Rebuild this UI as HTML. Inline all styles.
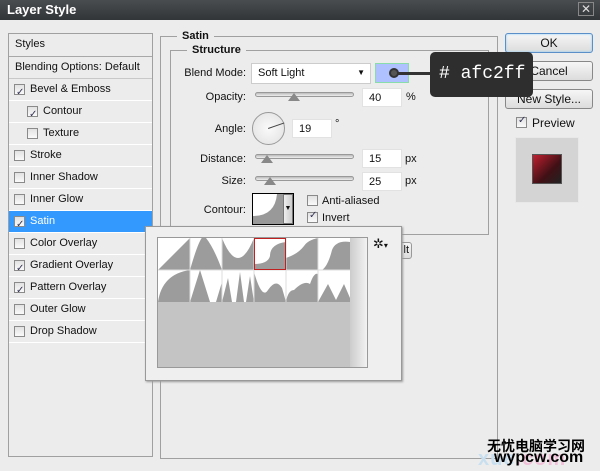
<!DOCTYPE html>
<html><head><meta charset="utf-8"><style>
*{margin:0;padding:0;box-sizing:border-box}
body{width:600px;height:471px;overflow:hidden;background:#ececec;font-family:"Liberation Sans","DejaVu Sans",sans-serif;font-size:11px;color:#111;position:relative}
.a{position:absolute}
.title{left:0;top:0;width:600px;height:20px;background:linear-gradient(#4a4d50,#323538);color:#fff;font-weight:bold;font-size:13px;line-height:20px;padding-left:7px}
.x{right:6px;top:2px;width:16px;height:14px;border:1px solid #888;color:#ddd;font-size:12px;line-height:12px;text-align:center}
.left{left:8px;top:33px;width:145px;height:424px;border:1px solid #a0a0a0;background:#ececec}
.row{position:absolute;left:0;width:143px;height:22px;border-bottom:1px solid #fff;line-height:21px}
.cb{position:absolute;width:11px;height:11px;border:1px solid #8a8a8a;background:linear-gradient(#e2e2e2,#fafafa)}
.cb.c::after{content:"✓";position:absolute;left:1px;top:-3px;font-size:10px;color:#335;font-weight:bold}
.box{border:1px solid #a0a0a0}
.leg{background:#ececec;font-weight:bold;padding:0 5px;line-height:12px}
.inp{background:#fff;border:1px solid #e2e2e2;padding-left:6px;line-height:18px}
.track{height:5px;border:1px solid #999;border-radius:3px;background:linear-gradient(#bbb,#eee)}
.thumb{width:0;height:0;border-left:6px solid transparent;border-right:6px solid transparent;border-bottom:8px solid #888}
.btn{left:505px;width:88px;height:20px;border:1px solid #888;border-radius:3px;background:linear-gradient(#f6f6f6,#dcdcdc);text-align:center;line-height:18px;font-size:12px}
.lbl{text-align:right;width:80px}
</style></head><body>
<div class="a title">Layer Style</div>
<div class="a x">✕</div>

<div class="a left">
 <div class="row" style="top:0;height:23px;padding-left:6px;border-bottom:1px solid #a8a8a8">Styles</div>
 <div class="row" style="top:23px;padding-left:6px;border-bottom:1px solid #c8c8c8">Blending Options: Default</div>
 <div class="row" style="top:45px"><span class="cb c" style="left:5px;top:5px"></span><span style="position:absolute;left:21px">Bevel &amp; Emboss</span></div>
 <div class="row" style="top:67px"><span class="cb c" style="left:18px;top:5px"></span><span style="position:absolute;left:34px">Contour</span></div>
 <div class="row" style="top:89px"><span class="cb" style="left:18px;top:5px"></span><span style="position:absolute;left:34px">Texture</span></div>
 <div class="row" style="top:111px"><span class="cb" style="left:5px;top:5px"></span><span style="position:absolute;left:21px">Stroke</span></div>
 <div class="row" style="top:133px"><span class="cb" style="left:5px;top:5px"></span><span style="position:absolute;left:21px">Inner Shadow</span></div>
 <div class="row" style="top:155px"><span class="cb" style="left:5px;top:5px"></span><span style="position:absolute;left:21px">Inner Glow</span></div>
 <div class="row" style="top:177px;background:#3399ff;color:#fff"><span class="cb c" style="left:5px;top:5px"></span><span style="position:absolute;left:21px">Satin</span></div>
 <div class="row" style="top:199px"><span class="cb" style="left:5px;top:5px"></span><span style="position:absolute;left:21px">Color Overlay</span></div>
 <div class="row" style="top:221px"><span class="cb c" style="left:5px;top:5px"></span><span style="position:absolute;left:21px">Gradient Overlay</span></div>
 <div class="row" style="top:243px"><span class="cb c" style="left:5px;top:5px"></span><span style="position:absolute;left:21px">Pattern Overlay</span></div>
 <div class="row" style="top:265px"><span class="cb" style="left:5px;top:5px"></span><span style="position:absolute;left:21px">Outer Glow</span></div>
 <div class="row" style="top:287px"><span class="cb" style="left:5px;top:5px"></span><span style="position:absolute;left:21px">Drop Shadow</span></div>
</div>

<div class="a box" style="left:160px;top:36px;width:338px;height:423px"></div>
<div class="a leg" style="left:177px;top:30px">Satin</div>
<div class="a box" style="left:170px;top:50px;width:319px;height:185px"></div>
<div class="a leg" style="left:187px;top:44px">Structure</div>

<div class="a lbl" style="left:166px;top:67px">Blend Mode:</div>
<div class="a inp" style="left:251px;top:63px;width:120px;height:21px;border-color:#ccc">Soft Light<span style="position:absolute;right:5px;top:0;font-size:8px">▼</span></div>
<div class="a" style="left:375px;top:63px;width:34px;height:20px;background:#afc2ff;border:1px solid #8da"></div>
<div class="a" style="left:389px;top:68px;width:10px;height:10px;border-radius:50%;background:#555;border:2px solid #333"></div>
<div class="a" style="left:398px;top:72px;width:34px;height:3px;background:#333"></div>

<div class="a lbl" style="left:166px;top:91px">Opacity:</div>
<div class="a track" style="left:255px;top:92px;width:99px"></div>
<div class="a thumb" style="left:288px;top:93px"></div>
<div class="a inp" style="left:362px;top:88px;width:40px;height:19px">40</div>
<div class="a" style="left:406px;top:91px">%</div>

<div class="a lbl" style="left:166px;top:123px">Angle:</div>
<div class="a" style="left:252px;top:112px;width:33px;height:33px;border-radius:50%;border:1px solid #999;background:radial-gradient(#fafafa,#e0e0e0)"></div>
<div class="a" style="left:268px;top:128px;width:17px;height:1px;background:#444;transform-origin:0 0;transform:rotate(-19deg)"></div>
<div class="a inp" style="left:292px;top:119px;width:40px;height:19px">19</div>
<div class="a" style="left:335px;top:118px">°</div>

<div class="a lbl" style="left:166px;top:153px">Distance:</div>
<div class="a track" style="left:255px;top:154px;width:99px"></div>
<div class="a thumb" style="left:261px;top:155px"></div>
<div class="a inp" style="left:362px;top:149px;width:40px;height:19px">15</div>
<div class="a" style="left:405px;top:153px">px</div>

<div class="a lbl" style="left:166px;top:175px">Size:</div>
<div class="a track" style="left:255px;top:176px;width:99px"></div>
<div class="a thumb" style="left:264px;top:177px"></div>
<div class="a inp" style="left:362px;top:172px;width:40px;height:19px">25</div>
<div class="a" style="left:405px;top:175px">px</div>

<div class="a lbl" style="left:166px;top:204px">Contour:</div>
<div class="a" style="left:252px;top:193px;width:42px;height:32px;border:1px solid #000;background:#fff;overflow:hidden">
 <svg width="40" height="30"><path d="M0 30 L0 22 Q22 22 24 0 L32 0 L32 30Z" fill="#999"/></svg>
</div>
<div class="a" style="left:283px;top:194px;width:10px;height:30px;background:linear-gradient(90deg,#eee,#ccc);border:1px solid #777;font-size:7px;text-align:center;line-height:28px">▼</div>
<div class="a cb" style="left:307px;top:195px"></div><div class="a" style="left:322px;top:195px">Anti-aliased</div>
<div class="a cb c" style="left:307px;top:212px"></div><div class="a" style="left:322px;top:212px">Invert</div>

<div class="a" style="left:385px;top:242px;width:27px;height:17px;border:1px solid #999;border-radius:3px;background:linear-gradient(#f6f6f6,#ddd);line-height:15px;text-align:right;padding-right:2px">lt</div>

<div class="a" style="left:145px;top:226px;width:257px;height:155px;background:#efefef;border:1px solid #999;box-shadow:1px 1px 2px #999"></div>
<div class="a" style="left:157px;top:237px;width:211px;height:131px;background:#c4c4c4;border:1px solid #999"></div>
<div class="a" style="left:350px;top:238px;width:17px;height:129px;background:linear-gradient(90deg,#ccc,#f2f2f2)"></div>
<svg class="a" style="left:158px;top:238px" width="192" height="64">
 <rect width="192" height="64" fill="#fff"/>
 <g fill="#9c9c9c">
 <path d="M0 32 L32 0 L32 32Z"/>
 <path d="M32 32 Q44 -10 48 0 Q56 10 64 32Z"/>
 <path d="M64 0 Q80 40 96 0 L96 32 L64 32Z"/>
 <path d="M96 32 L96 26 Q110 26 112 18 Q112 6 128 4 L128 32Z"/>
 <path d="M128 32 L128 20 Q140 16 146 8 Q150 2 160 0 L160 32Z"/>
 <path d="M160 32 L164 32 Q170 28 174 12 Q178 2 192 4 L192 32Z"/>
 <path d="M0 64 Q4 36 32 32 L32 64Z"/>
 <path d="M32 64 L42 32 L52 64 L58 64 L64 44 L64 64Z"/>
 <path d="M64 64 L70 40 L74 64 L78 64 L82 34 L86 64 L88 64 L92 38 L96 64Z"/>
 <path d="M96 64 L96 34 Q104 62 110 52 Q118 40 124 50 L128 64Z"/>
 <path d="M128 64 Q130 52 136 52 Q146 42 152 46 Q156 34 160 36 L160 64Z"/>
 <path d="M160 64 L170 46 L178 62 L186 46 L192 60 L192 64Z"/>
 </g>
 <g stroke="#ddd"><path d="M32 0V64M64 0V64M96 0V64M128 0V64M160 0V64M0 32H192"/></g>
 <rect x="96.5" y="0.5" width="31" height="31" fill="none" stroke="#c02020"/>
</svg>
<div class="a" style="left:373px;top:236px;font-size:13px">✲<span style="font-size:8px">▾</span></div>

<div class="a btn" style="top:33px;border-color:#5a8fc8;box-shadow:0 0 2px #8cf inset">OK</div>
<div class="a btn" style="top:61px">Cancel</div>
<div class="a btn" style="top:89px">New Style...</div>
<div class="a" style="left:430px;top:52px;width:103px;height:45px;background:#2e2e2e;border-radius:5px;color:#fff;font-family:'Liberation Mono',monospace;font-size:18px;line-height:45px;padding-left:9px">#&nbsp;afc2ff</div>
<div class="a cb c" style="left:516px;top:117px"></div>
<div class="a" style="left:532px;top:116px;font-size:12px">Preview</div>
<div class="a" style="left:515px;top:137px;width:64px;height:66px;background:#d4d4d4;border:1px solid #e8e8e8"></div>
<div class="a" style="left:532px;top:154px;width:30px;height:30px;background:linear-gradient(135deg,#c02030,#401015 60%,#222);border:1px solid #555"></div>

<div class="a" style="left:478px;top:448px;font-size:20px;font-weight:bold;color:#c8dff0;letter-spacing:1px">xue<span style="color:#f0c0d8">.com</span></div>
<div class="a" style="left:487px;top:436px;font-family:'Liberation Sans','Noto Sans CJK SC',sans-serif;font-size:14px;font-weight:bold;color:#000">无忧电脑学习网</div>
<div class="a" style="left:494px;top:449px;font-size:16px;font-weight:bold;color:#000">wypcw.com</div>
</body></html>
